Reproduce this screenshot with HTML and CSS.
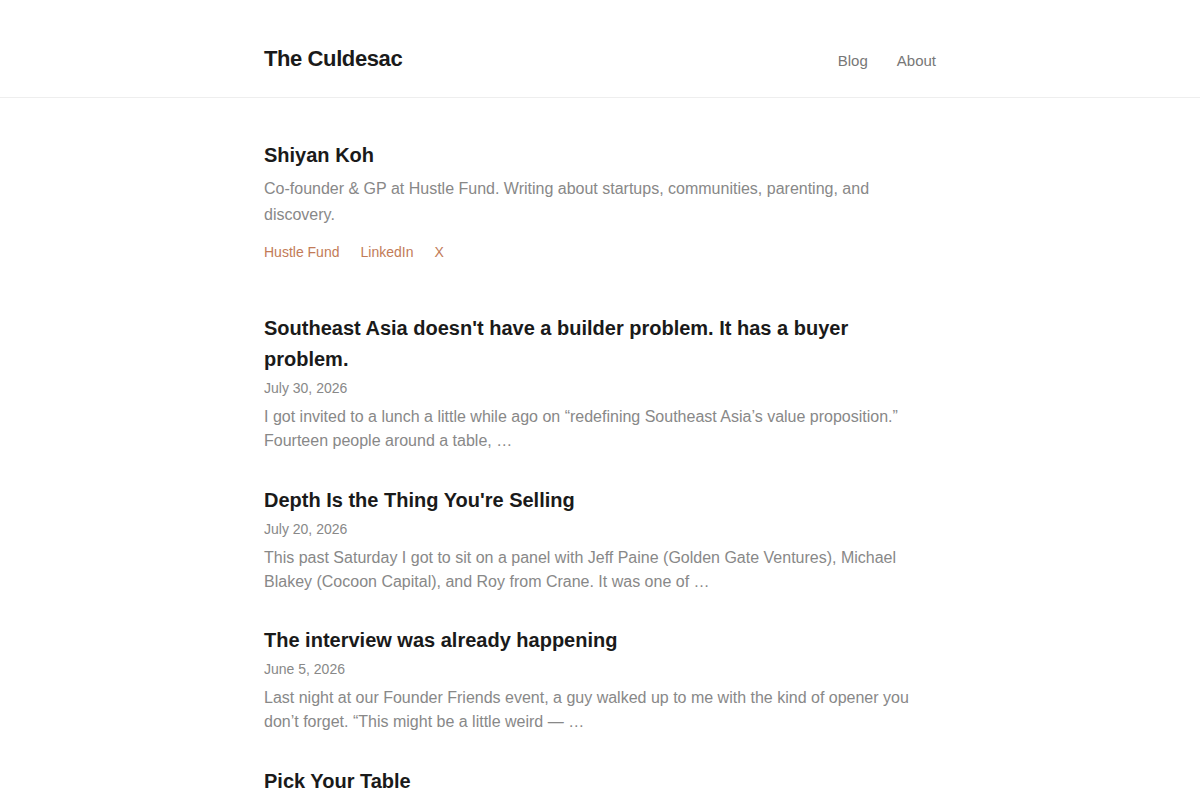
FILE: index.html
```html
<!DOCTYPE html>
<html lang="en">
<head>
<meta charset="utf-8">
<title>The Culdesac</title>
<link rel="stylesheet" href="styles.css">
</head>
<body>
<header class="site-header">
  <div class="wrap header-inner">
    <a class="brand" href="#">The Culdesac</a>
    <nav class="nav">
      <a href="#">Blog</a>
      <a href="#">About</a>
    </nav>
  </div>
</header>
<main class="wrap main">
  <section class="profile">
    <h1 class="name">Shiyan Koh</h1>
    <p class="bio">Co-founder &amp; GP at Hustle Fund. Writing about startups, communities, parenting, and discovery.</p>
    <div class="links">
      <a href="#">Hustle Fund</a>
      <a href="#">LinkedIn</a>
      <a href="#">X</a>
    </div>
  </section>
  <section class="posts">
    <article class="post">
      <h2 class="post-title"><a href="#">Southeast Asia doesn't have a builder problem. It has a buyer problem.</a></h2>
      <div class="date">July 30, 2026</div>
      <p class="excerpt">I got invited to a lunch a little while ago on “redefining Southeast Asia’s value proposition.” Fourteen people around a table, …</p>
    </article>
    <article class="post">
      <h2 class="post-title"><a href="#">Depth Is the Thing You're Selling</a></h2>
      <div class="date">July 20, 2026</div>
      <p class="excerpt">This past Saturday I got to sit on a panel with Jeff Paine (Golden Gate Ventures), Michael Blakey (Cocoon Capital), and Roy from Crane. It was one of …</p>
    </article>
    <article class="post">
      <h2 class="post-title"><a href="#">The interview was already happening</a></h2>
      <div class="date">June 5, 2026</div>
      <p class="excerpt">Last night at our Founder Friends event, a guy walked up to me with the kind of opener you don’t forget. “This might be a little weird — …</p>
    </article>
    <article class="post">
      <h2 class="post-title"><a href="#">Pick Your Table</a></h2>
      <div class="date">May 18, 2026</div>
      <p class="excerpt">A few thoughts on where you sit, who you sit with, and why it matters more than you think …</p>
    </article>
  </section>
</main>
</body>
</html>
```
FILE: styles.css
```css
* { box-sizing: border-box; }
html, body { margin: 0; padding: 0; background: #fff; }
body {
  font-family: "Liberation Sans", Arial, sans-serif;
  color: #1a1a1a;
}
a { text-decoration: none; color: inherit; }
.wrap { width: 672px; margin: 0 auto; }

.site-header { border-bottom: 1px solid #eeeeee; }
.header-inner {
  height: 97px;
  display: flex;
  align-items: center;
  justify-content: space-between;
  padding-top: 20px;
}
.brand {
  font-size: 22px;
  font-weight: 700;
  color: #1a1a1a;
  letter-spacing: -0.4px;
}
.nav { display: flex; gap: 29px; padding-top: 3px; }
.nav a { font-size: 15px; color: #777; }

.main { padding-top: 45px; }
.name {
  margin: 0;
  font-size: 20px;
  font-weight: 700;
  line-height: 24px;
}
.bio {
  margin: 9px 0 0;
  font-size: 16px;
  line-height: 26px;
  color: #888;
}
.links { display: flex; gap: 21px; margin-top: 15px; }
.links a { font-size: 14px; line-height: 18px; color: #c27b57; }

.posts { margin-top: 52px; }
.post { margin-bottom: 31.5px; }
.post-title {
  margin: 0;
  font-size: 20px;
  font-weight: 700;
  line-height: 31px;
  color: #1a1a1a;
}
.date {
  margin-top: 5px;
  font-size: 14px;
  line-height: 16px;
  color: #888;
}
.excerpt {
  margin: 9px 0 0;
  font-size: 16px;
  line-height: 24px;
  color: #888;
}
```
